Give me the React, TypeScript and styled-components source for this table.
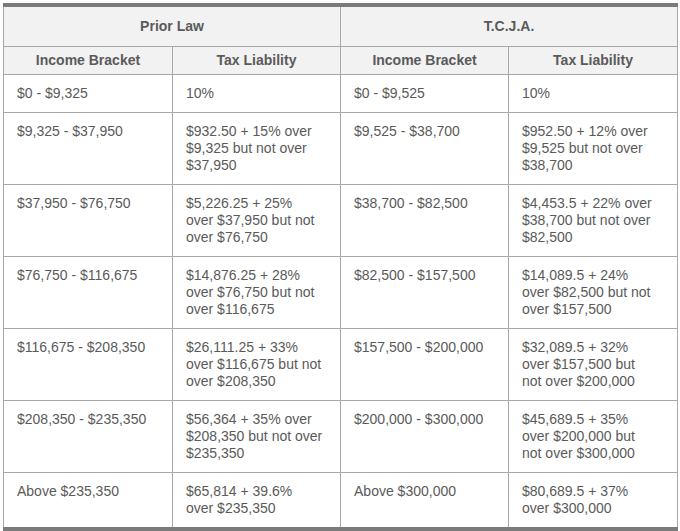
import React from "react";
import styled, { createGlobalStyle } from "styled-components";

const GlobalStyle = createGlobalStyle`
  body {
    margin: 0;
    background: #ffffff;
    font-family: "Liberation Sans", Arial, sans-serif;
  }
`;

const Page = styled.div`
  padding: 3px 0 0 3px;
`;

const Table = styled.table`
  width: 674px;
  table-layout: fixed;
  border-collapse: collapse;
  border-top: 4px solid #7b7b7b;
  border-bottom: 5px solid #7b7b7b;
  border-left: 1px solid #a8a8a8;
  border-right: 1px solid #a8a8a8;
  font-size: 14px;
  line-height: 17px;
  color: #5a5a5a;
`;

const GroupHead = styled.th`
  background: #f2f2f2;
  border: 1px solid #a8a8a8;
  border-top: none;
  font-weight: bold;
  text-align: center;
  height: 39px;
  padding: 0;
`;

const ColHead = styled.th`
  background: #f2f2f2;
  border: 1px solid #a8a8a8;
  font-weight: bold;
  text-align: center;
  height: 27px;
  padding: 0;
`;

const Cell = styled.td`
  border: 1px solid #a8a8a8;
  vertical-align: top;
  padding: 10px 13px;
  white-space: nowrap;
`;

type Row = {
  priorBracket: string;
  priorTax: string[];
  tcjaBracket: string;
  tcjaTax: string[];
};

const rows: Row[] = [
  { priorBracket: "$0 - $9,325", priorTax: ["10%"], tcjaBracket: "$0 - $9,525", tcjaTax: ["10%"] },
  {
    priorBracket: "$9,325 - $37,950",
    priorTax: ["$932.50 + 15% over", "$9,325 but not over", "$37,950"],
    tcjaBracket: "$9,525 - $38,700",
    tcjaTax: ["$952.50 + 12% over", "$9,525 but not over", "$38,700"],
  },
  {
    priorBracket: "$37,950 - $76,750",
    priorTax: ["$5,226.25 + 25%", "over $37,950 but not", "over $76,750"],
    tcjaBracket: "$38,700 - $82,500",
    tcjaTax: ["$4,453.5 + 22% over", "$38,700 but not over", "$82,500"],
  },
  {
    priorBracket: "$76,750 - $116,675",
    priorTax: ["$14,876.25 + 28%", "over $76,750 but not", "over $116,675"],
    tcjaBracket: "$82,500 - $157,500",
    tcjaTax: ["$14,089.5 + 24%", "over $82,500 but not", "over $157,500"],
  },
  {
    priorBracket: "$116,675 - $208,350",
    priorTax: ["$26,111.25 + 33%", "over $116,675 but not", "over $208,350"],
    tcjaBracket: "$157,500 - $200,000",
    tcjaTax: ["$32,089.5 + 32%", "over $157,500 but", "not over $200,000"],
  },
  {
    priorBracket: "$208,350 - $235,350",
    priorTax: ["$56,364 + 35% over", "$208,350 but not over", "$235,350"],
    tcjaBracket: "$200,000 - $300,000",
    tcjaTax: ["$45,689.5 + 35%", "over $200,000 but", "not over $300,000"],
  },
  {
    priorBracket: "Above $235,350",
    priorTax: ["$65,814 + 39.6%", "over $235,350"],
    tcjaBracket: "Above $300,000",
    tcjaTax: ["$80,689.5 + 37%", "over $300,000"],
  },
];

const Lines: React.FC<{ lines: string[] }> = ({ lines }) => (
  <>
    {lines.map((line, i) => (
      <React.Fragment key={i}>
        {i > 0 && <br />}
        {line}
      </React.Fragment>
    ))}
  </>
);

const App: React.FC = () => (
  <Page>
    <GlobalStyle />
    <Table>
      <colgroup>
        <col style={{ width: 169 }} />
        <col style={{ width: 168 }} />
        <col style={{ width: 168 }} />
        <col style={{ width: 169 }} />
      </colgroup>
      <thead>
        <tr>
          <GroupHead colSpan={2}>Prior Law</GroupHead>
          <GroupHead colSpan={2}>T.C.J.A.</GroupHead>
        </tr>
        <tr>
          <ColHead>Income Bracket</ColHead>
          <ColHead>Tax Liability</ColHead>
          <ColHead>Income Bracket</ColHead>
          <ColHead>Tax Liability</ColHead>
        </tr>
      </thead>
      <tbody>
        {rows.map((row) => (
          <tr key={row.priorBracket}>
            <Cell>{row.priorBracket}</Cell>
            <Cell>
              <Lines lines={row.priorTax} />
            </Cell>
            <Cell>{row.tcjaBracket}</Cell>
            <Cell>
              <Lines lines={row.tcjaTax} />
            </Cell>
          </tr>
        ))}
      </tbody>
    </Table>
  </Page>
);

export default App;
